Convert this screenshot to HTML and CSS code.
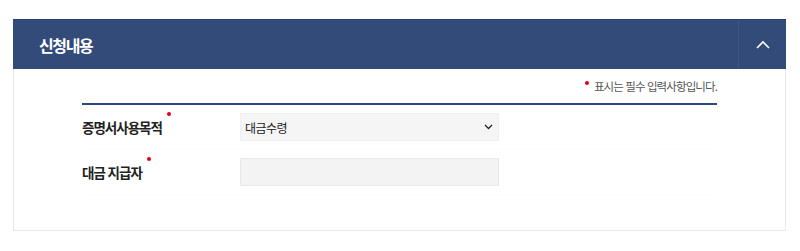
FILE: index.html
```html
<!DOCTYPE html>
<html lang="ko">
<head>
  <meta charset="UTF-8" />
  <title>신청내용</title>
  <link rel="stylesheet" href="styles.css">
</head>
<body>
  <section class="panel">
    <div class="panel-head">
      <h2>신청내용</h2>
      <button class="toggle" type="button" aria-label="접기">
        <svg width="14" height="9" viewBox="0 0 14 9"><path d="M1 8 L7 2 L13 8" fill="none" stroke="#fff" stroke-width="1.6"/></svg>
      </button>
    </div>

    <div class="panel-body">
      <p class="note"><span class="req"></span>표시는 필수 입력사항입니다.</p>

      <div class="form">
        <div class="row">
          <label class="label" for="purpose">증명서사용목적<span class="req"></span></label>
          <div class="field">
            <select id="purpose">
              <option>대금수령</option>
            </select>
          </div>
        </div>
        <div class="row">
          <label class="label" for="payer">대금 지급자<span class="req"></span></label>
          <div class="field">
            <input id="payer" type="text" />
          </div>
        </div>
      </div>
    </div>
  </section>
</body>
</html>
```

FILE: styles.css
```css
:root {
  --navy: #324b79;
  --navy-line: #2b4882;
  --red: #e0001b;
  --border: #e9e9e9;
  --field: #f5f5f5;
  --text: #222;
}

* {
  box-sizing: border-box;
  margin: 0;
  padding: 0;
}

body {
  font-family: "Noto Sans CJK KR", "Noto Sans", sans-serif;
  background: #fff;
  color: var(--text);
  padding: 19px 14px 0 13px;
}

.panel {
  border: 1px solid var(--border);
  border-top: none;
  height: 212px;
}

.panel-head {
  display: flex;
  align-items: center;
  height: 50px;
  margin: 0 -1px;
  background: var(--navy);
  border-top: 1px solid #2a4068;
}

.panel-head h2 {
  flex: 1;
  padding-left: 26px;
  font-size: 16px;
  font-weight: 700;
  color: #fff;
  letter-spacing: -1.4px;
}

.toggle {
  width: 48px;
  height: 100%;
  display: flex;
  align-items: center;
  justify-content: center;
  background: none;
  border: none;
  border-left: 1px solid #3d5684;
  cursor: pointer;
}

.panel-body {
  padding: 0 68px 0 68px;
}

.note {
  display: flex;
  justify-content: flex-end;
  align-items: flex-start;
  padding-top: 9px;
  height: 36px;
  font-size: 11.5px;
  color: #555;
  letter-spacing: -0.9px;
  border-bottom: 2px solid var(--navy-line);
}

.note .req {
  margin: 3px 5px 0 0;
}

.req {
  display: inline-block;
  width: 4px;
  height: 4px;
  border-radius: 50%;
  background: var(--red);
  vertical-align: top;
}

.row {
  display: flex;
  align-items: center;
  height: 45px;
  border-bottom: 1px solid #fcfcfc;
}

.label {
  width: 158px;
  font-size: 13.5px;
  font-weight: 700;
  letter-spacing: -1px;
  display: flex;
  align-items: flex-start;
}

.label .req {
  margin: -5px 0 0 5px;
}

.field {
  width: 259px;
}

select,
input {
  width: 100%;
  height: 28px;
  font-family: inherit;
  font-size: 12px;
  color: var(--text);
  background: var(--field);
  border: 1px solid #efefef;
  border-radius: 0;
  appearance: none;
  outline: none;
}

select {
  padding: 0 24px 0 4px;
  letter-spacing: -0.5px;
  background: var(--field) url("data:image/svg+xml;utf8,<svg xmlns='http://www.w3.org/2000/svg' width='9' height='6' viewBox='0 0 9 6'><path d='M1 1 L4.5 4.5 L8 1' fill='none' stroke='%23222' stroke-width='1.3'/></svg>") no-repeat right 5px center;
}

input {
  padding: 0 6px;
  background: #f3f3f3;
  border-color: #e8e8e8;
}
```
